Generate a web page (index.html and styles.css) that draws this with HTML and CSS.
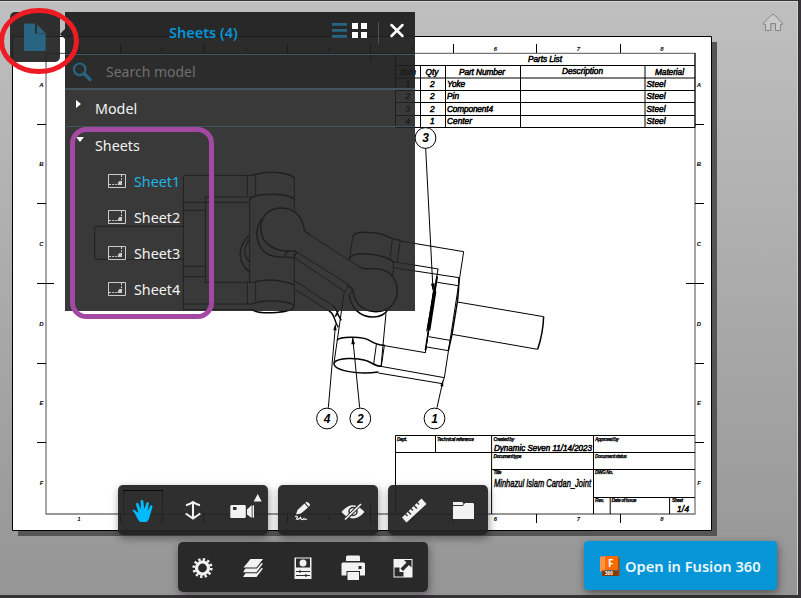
FILE: index.html
```html
<!DOCTYPE html>
<html lang="en">
<head>
<meta charset="utf-8">
<title>Sheets viewer</title>
<link rel="stylesheet" href="styles.css">
</head>
<body>
<main class="viewer">
  <svg class="drawing" width="801" height="598" viewBox="0 0 801 598">
    <path d="M18 42H717V536H18z" fill="#555"/>
    <path d="M12.5 36.5H711.5V530.5H12.5z" fill="#fff" stroke="#000"/>
    <g class="frame">
      <path d="M46 53.3H695V514H46z" stroke="#777" stroke-width="1.3"/>
      <path d="M120.5 44v9M203.7 44v9M287.5 44v9M370.5 44v17M453.5 44v9M536.5 44v9M620.5 44v9M120.5 514v9M203.7 514v9M287.5 514v9M370.5 505v18M453.5 514v9M536.5 514v9M620.5 514v9"/>
      <path d="M37 124.5h9M37 203.5h9M37 283.5h17M37 363.5h9M37 442.5h9M695 124.5h9M695 203.5h9M686 283.5h18M695 363.5h9M695 442.5h9"/>
      <path d="M395.5 53V127.5H695V53M395.5 65.5H695M395.5 78H695M395.5 90.5H695M395.5 102.5H695M395.5 115.5H695M420.5 65.5v62M445.5 65.5v62M520.5 65.5v62M645 65.5v62"/>
      <path d="M395.5 514V435.5H695M395.5 452.5H695M491.6 469.5H695M593.5 497.5H695M435.5 435.5v17M491.6 435.5V514M593.5 435.5V514M610.2 497.5V514M669.6 497.5V514"/>
    </g>
    <g class="mark">
      <text x="79" y="51">1</text><text x="162" y="51">2</text><text x="245.500" y="51">3</text><text x="329" y="51">4</text><text x="412" y="51">5</text><text x="495.500" y="51">6</text><text x="578.500" y="51">7</text><text x="662" y="51">8</text>
      <text x="79" y="521">1</text><text x="162" y="521">2</text><text x="245.500" y="521">3</text><text x="329" y="521">4</text><text x="412" y="521">5</text><text x="495.500" y="521">6</text><text x="578.500" y="521">7</text><text x="662" y="521">8</text>
      <text x="41.500" y="87">A</text><text x="41.500" y="166">B</text><text x="41.500" y="246">C</text><text x="41.500" y="325.500">D</text><text x="41.500" y="405">E</text><text x="41.500" y="484.500">F</text>
      <text x="699" y="87">A</text><text x="699" y="166">B</text><text x="699" y="246">C</text><text x="699" y="325.500">D</text><text x="699" y="405">E</text><text x="699" y="484.500">F</text>
    </g>
    <g class="parts">
      <text x="528" y="62.300" textLength="34">Parts List</text>
      <text x="400" y="74.500" textLength="16">Item</text><text x="425.500" y="74.500" textLength="13">Qty</text><text x="459" y="74.500" textLength="46">Part Number</text><text x="562" y="74" textLength="41">Description</text><text x="655" y="74.500" textLength="29">Material</text>
      <text x="405.500" y="86.700">1</text><text x="430" y="86.700">2</text><text x="447" y="86.700" textLength="18">Yoke</text><text x="646.500" y="86.700" textLength="19">Steel</text>
      <text x="405.500" y="99">2</text><text x="430" y="99">2</text><text x="447" y="99" textLength="12">Pin</text><text x="646.500" y="99" textLength="19">Steel</text>
      <text x="405.500" y="111.500">3</text><text x="430" y="111.500">2</text><text x="447" y="111.500" textLength="46">Component4</text><text x="646.500" y="111.500" textLength="19">Steel</text>
      <text x="405.500" y="124">4</text><text x="430" y="124">1</text><text x="447" y="124" textLength="25">Center</text><text x="646.500" y="124" textLength="19">Steel</text>
      <text x="494" y="450.500" textLength="98" lengthAdjust="spacingAndGlyphs">Dynamic Seven 11/14/2023</text>
      <text class="name" x="494" y="486.500" textLength="97" lengthAdjust="spacingAndGlyphs">Minhazul Islam Cardan_Joint</text>
      <text x="677" y="512" textLength="12">1/4</text>
    </g>
    <g class="caption">
      <text x="397" y="440.500" textLength="10">Dept.</text><text x="437" y="441" textLength="37">Technical reference</text><text x="493.500" y="441" textLength="21">Created by</text><text x="595" y="441" textLength="24">Approved by</text><text x="493.500" y="457.500" textLength="28">Document type</text><text x="595" y="457.500" textLength="32">Document status</text><text x="493.500" y="474" textLength="8">Title</text><text x="595" y="474" textLength="18">DWG No.</text><text x="595" y="502.200" textLength="9">Rev.</text><text x="611.500" y="502.200" textLength="25">Date of issue</text><text x="672" y="502.200" textLength="11">Sheet</text>
    </g>
    <!-- yoke, left half and arm -->
    <g class="part" transform="translate(180 150) scale(.33333)">
      <path d="M10 229H-256V328H10M10 76V479M10 76H215M202 76V140M10 157H209M10 181H76M10 349H76M10 380H76M76 141V397M76 141H215M76 397H225M10 462H215M10 479H225M202 397V462M209 150V397M343 82V182M343 310V465M227 74V138M227 395V455"/>
      <path class="bold" d="M215 76Q280 58 330 75L344 84M209 150Q218 133 280 133Q330 134 344 149M225 395Q280 382 344 405"/>
      <path class="bold" d="M215 463C240 448 330 450 343 468C345 489 240 495 215 479M209 254C172 290 170 334 209 367M209 266C191 292 188 314 209 337"/>
      <path class="bold" d="M348 302C300 309 242 290 242 235C243 195 270 174 305 174C348 174 367 206 372 236Q375 247 387 253M245 207C215 247 232 320 297 320L340 323M326 300L313 317M350 307L341 322"/>
      <path d="M387 253L538 350M344 302L508 405M343 323L494 424M343 392L457 466M343 417L447 483M508 405L494 424M520 416L505 442"/>
      <path class="bold" d="M538 350Q550 359 570 356C625 350 653 385 652 424C651 460 625 485 588 485C555 485 526 466 520 429Q517 408 500 408M508 438C515 475 540 501 578 501C605 500 618 490 624 478"/>
      <path class="bold" d="M519 259C523 241 585 246 605 253C628 260 640 270 661 271M508 330C510 301 585 313 610 320Q635 328 641 339M457 466Q470 475 473 492L484 511M447 483C465 490 462 515 475 532M475 481L466 500"/>
      <path d="M519 257L508 330M637 267L630 330M661 271L651 338M641 339L638 376"/>
    </g>
    <!-- yoke, right half and shaft -->
    <g class="part" transform="translate(310 220) scale(.33333)">
      <path d="M270 63L461 95L403 473L397 491M250 125L385 147M250 143L447 173M382 187L445 197M442 246L701 290M683 388L426 343M103 213L72 429M228 280L213 440M218 376L346 398L384 147M356 350L420 361M350 381L415 392M212 439L403 473M205 459L397 491M199 374L191 432M223 377L214 438M347 -216L369 210M397 491L381 563M128 352L149 563M76 320L55 563"/>
      <path class="bold" d="M81 361C90 347 162 350 178 361Q200 375 224 376M72 429C82 411 143 414 165 421C183 425 196 440 215 439M72 429C70 455 150 463 205 456M447 173Q446 215 442 246L426 343L415 392M701 290Q699 340 683 388"/>
      <path d="M380 168L356 334M376 190L350 334M372 205L346 398"/>
      <path class="bold" d="M382 170L346 390"/>
      <path d="M374 213L356 330" class="thick"/>
      <path class="tip" d="M128 352L135 373H124zM76 310L80 331H70zM399 480L400 500L391 497zM369 212L374 190L363 191z"/>
    </g>
    <g class="balloon">
      <circle cx="425.500" cy="138" r="10.400"/><text x="425.500" y="142.300">3</text>
      <circle cx="327" cy="418.500" r="10.400"/><text x="327" y="422.800">4</text>
      <circle cx="360.300" cy="418.500" r="10.400"/><text x="360.300" y="422.800">2</text>
      <circle cx="434.500" cy="418.500" r="10.400"/><text x="434.500" y="422.800">1</text>
    </g>
    <path class="home" d="M763.500 23.200L771.500 15Q773 13.500 774.500 15L782.500 23.200V24.300H780.600V30.500H775.500V23.500H770.800V30.500H765.500V24.300H763.500z"/>
  </svg>

  <button class="doc" aria-label="Documents"><svg width="50" height="50"><path d="M15 11.500H25V21.500H35.700V37.500Q35.700 39 34.200 39H15.500Q14 39 14 37.500V13zM27 12.500L35.500 21H27z"/></svg></button>

  <section class="panel">
    <header class="head">
      <h1>Sheets (4)</h1>
      <svg width="100" height="42" viewBox="315 12 100 42">
        <path d="M332 23h15v2.800h-15zM332 29h15v2.800h-15zM332 35h15v2.800h-15z" fill="#276582"/>
        <path d="M352 23h6v6h-6zM361 23h6v6h-6zM352 32h6v6h-6zM361 32h6v6h-6z" fill="#fff"/>
        <path d="M378.500 22V44" stroke="#45545d"/>
        <path d="M391.500 25L402.500 36M402.500 25L391.500 36" stroke="#fff" stroke-width="2.500" stroke-linecap="round"/>
      </svg>
    </header>
    <div class="search"><svg width="41" height="33"><circle cx="14.700" cy="14.300" r="5.800" fill="none" stroke="#276582" stroke-width="2.200"/><path d="M19 18.500L25 24.500" stroke="#276582" stroke-width="3.200" stroke-linecap="round"/></svg><span>Search model</span></div>
    <div class="group model"><i class="closed"></i>Model</div>
    <div class="group"><i class="open"></i>Sheets</div>
    <ul class="sheets">
      <li class="on"><svg class="thumb" viewBox="0 0 18 14"><path d="M.5.500h17v13H.5z"/><path d="M1 10.500h9M13.500 1v6" stroke-dasharray="2 1.200"/><path d="M10 11V8.500L11.500 7H14V11z" class="solid"/></svg>Sheet1</li>
      <li><svg class="thumb" viewBox="0 0 18 14"><path d="M.5.500h17v13H.5z"/><path d="M1 10.500h9M13.500 1v6" stroke-dasharray="2 1.200"/><path d="M10 11V8.500L11.500 7H14V11z" class="solid"/></svg>Sheet2</li>
      <li><svg class="thumb" viewBox="0 0 18 14"><path d="M.5.500h17v13H.5z"/><path d="M1 10.500h9M13.500 1v6" stroke-dasharray="2 1.200"/><path d="M10 11V8.500L11.500 7H14V11z" class="solid"/></svg>Sheet3</li>
      <li><svg class="thumb" viewBox="0 0 18 14"><path d="M.5.500h17v13H.5z"/><path d="M1 10.500h9M13.500 1v6" stroke-dasharray="2 1.200"/><path d="M10 11V8.500L11.500 7H14V11z" class="solid"/></svg>Sheet4</li>
    </ul>
  </section>

  <nav class="tools">
    <div class="row">
      <div class="bar">
        <button class="active" aria-label="Pan"><svg viewBox="0 0 50 50"><path d="M14.300 25Q16.500 24 18.500 26.500L20.500 28 18 19.500Q18 17 20 18L23 24.500 22.500 16.500Q23.500 13.500 25.300 16L26.300 24 28.500 17.500Q30.500 16 31 18.500L29.500 26 32.500 20.500Q34.500 19.500 34.500 22L31.500 32Q31 35.500 28.500 37H22Q19.500 35 17.800 30z" fill="#00baff"/></svg></button>
        <button aria-label="Dolly"><svg viewBox="0 0 50 50"><path d="M25 17V33M18 20.300Q22 19.300 25 17Q28 19.300 32 20.300M17.700 28.500L25 33.500L32.300 28.500" fill="none" stroke="#f2f2f2" stroke-width="2.100"/></svg></button>
        <button aria-label="Camera"><svg viewBox="0 0 50 50"><path fill-rule="evenodd" d="M13.300 20H26.800Q27.800 20 27.800 21.500V31.500Q27.800 33 26.800 33H13.300Q12.300 33 12.300 31.500V21.500Q12.300 20 13.300 20zM15 22V25H18.500V22zM29 24.500L33.700 20V33L29 29.500zM34.500 21L36 20V33L34.500 32zM39.700 9L43.700 16.500H35.700z"/></svg></button>
      </div>
      <div class="bar">
        <button aria-label="Markup"><svg viewBox="0 0 50 50"><path d="M18 29.500L19.500 25 26.500 18.500 30 22.500 23 28.500zM27.300 17.800L28.500 16.800Q32 18 32 20.500L30.800 21.800z"/><path d="M17 31.500Q21 31 18.500 34Q20 35 22.500 32.500Q23.500 36 26 33.500Q27 35 29 34" fill="none" stroke="#f2f2f2" stroke-width="1.200"/></svg></button>
        <button aria-label="Hide"><svg viewBox="0 0 50 50"><path d="M13.500 27Q24.500 13.500 36.500 27Q25 40 13.500 27z"/><circle cx="25" cy="26.500" r="4" fill="none" stroke="#303030" stroke-width="1.500"/><path d="M17 35L33.500 18" stroke="#303030" stroke-width="3.600"/><path d="M17 34.500L33 19" stroke="#f2f2f2" stroke-width="1.600"/></svg></button>
      </div>
      <div class="bar">
        <button aria-label="Measure"><svg viewBox="0 0 50 50"><path d="M14 32.500L33.500 13.500 38.500 19 18.500 37.500z"/><path d="M17.500 29l2 2M20 26.500l3 3M23 23.500l2 2M26 20.500l3 3M29 17.500l2 2" stroke="#303030" stroke-width="1.300"/></svg></button>
        <button aria-label="Folder"><svg viewBox="0 0 50 50"><path d="M15 17H24Q25.500 18 25.500 19.200L24.500 20H15zM15 21H25L27 18H35Q36 18.200 36 20V34H15z"/></svg></button>
      </div>
    </div>
    <div class="row">
      <div class="bar">
        <button aria-label="Settings"><svg viewBox="0 0 50 50"><circle cx="24.500" cy="26" r="6" fill="none" stroke="#f2f2f2" stroke-width="3.200"/><circle cx="24.500" cy="26" r="8.600" fill="none" stroke="#f2f2f2" stroke-width="3" stroke-dasharray="2.300 2.203"/></svg></button>
        <button aria-label="Layers"><svg viewBox="0 0 50 50"><path d="M22.500 17H35L28.500 25.500H15.500zM17.500 26.500H29L33.500 21 35 21.500 28.500 30.300H15zM17.500 31.300H29L33.500 26 35 26.500 28.500 35H15z"/></svg></button>
        <button aria-label="Properties"><svg viewBox="0 0 50 50"><path d="M16.500 15.500H33.500V37H16.500z"/><path d="M18 16.500H32V25.500H18z" fill="#2a2a2a"/><circle cx="25" cy="21" r="3.500"/><path d="M18 29.500h14M18 33.500h14M22 28v3M28 32v3" stroke="#2a2a2a" stroke-width="1.100"/></svg></button>
        <button aria-label="Print"><svg viewBox="0 0 50 50"><path d="M18 15Q18 13.500 19.500 13.500H31Q32 13.500 32 15V19H18zM15 20.500H35.500Q37 20.500 37 22V33.500H32V29H18.500V33.500H13.500V22Q13.500 20.500 15 20.500zM19.500 30H31V38H19.500z"/><path d="M30.500 24h3v3h-3z" fill="#2a2a2a"/></svg></button>
        <button aria-label="Full screen"><svg viewBox="0 0 50 50"><path d="M15.500 17H34.500V35.500H15.500z"/><path d="M16.500 25.500H21.500V30H25.500V34.500H16.500zM26 18H33.500V25.500L31 23 25 29 22.500 26.500 28.500 20.500z" fill="#2a2a2a"/></svg></button>
      </div>
    </div>
  </nav>

  <button class="fusion"><svg width="20" height="20"><path d="M0 1L2 0V15L0 16z" fill="#ff9346"/><path d="M1 1L5 0V15H1z" fill="#ff9346"/><path d="M5 0H18V14H5z" fill="#ff6b00"/><path d="M18 1L19.500 2V19L18 20z" fill="#a64600"/><path d="M2 14.500H18.500V20H2z" fill="#873900"/><text x="8" y="11" class="f">F</text><text x="5" y="19" class="n">360</text></svg><span>Open in Fusion 360</span></button>

  <svg class="notes" width="801" height="598"><ellipse cx="39" cy="41" rx="37.500" ry="30.500" stroke="#ed1c24"/><rect x="72.500" y="129.500" width="139" height="187" rx="14" stroke="#a349a4"/></svg>
</main>
</body>
</html>
```
FILE: styles.css
```css
* { box-sizing: border-box; }
body { margin: 0; overflow: hidden; background: #383638; font-family: "Noto Sans", sans-serif; }
.viewer { position: relative; width: 801px; height: 598px; background: linear-gradient(#bfbfbf, #959595); overflow: hidden; }
.viewer::before { content: ""; position: absolute; inset: 1px 3px 3px 0; border-right: 1px solid #d0d0d0; box-shadow: 0 0 0 4px #353335, inset 0 1px #d5d5d5; }
.drawing, .notes { position: absolute; inset: 0; }
.notes { fill: none; stroke-width: 5; pointer-events: none; }
.drawing text { font-family: "Liberation Sans", sans-serif; font-style: italic; font-weight: bold; }
.frame { fill: none; stroke: #000; }
.mark { font-size: 6px; text-anchor: middle; }
.drawing .parts text { font-size: 8.3px; font-weight: normal; stroke: #000; stroke-width: .5px; }
.drawing .parts .name { font-size: 11.5px; }
.caption { font-size: 4.8px; stroke: #000; stroke-width: .25px; }
.part { fill: none; stroke: #000; }
.part path { vector-effect: non-scaling-stroke; }
.part .bold { stroke-width: 1.5px; }
.part .thick { stroke-width: 3.5px; }
.part .tip { fill: #000; stroke: none; }
.balloon { font-size: 12px; text-anchor: middle; fill: #000; }
.balloon circle { fill: #fff; stroke: #000; }
.home { fill: #c9c9c9; stroke: #858585; }
button { border: 0; padding: 0; background: none; }
.doc { position: absolute; left: 10px; top: 12px; width: 50px; height: 50px; border-radius: 5px; background: rgba(34, 34, 34, .93); }
.doc::after { content: ""; position: absolute; left: 50px; top: 17px; border: 5px solid transparent; border-left: 0; border-right-color: #292929; }
.doc svg { display: block; fill: #276582; }
.panel { position: absolute; left: 65px; top: 12px; width: 350px; height: 299px; background: rgba(35, 35, 35, .9); color: #f2f2f2; font-size: 15px; }
.head { display: flex; justify-content: flex-end; height: 42px; background: rgba(24, 24, 24, .4); }
.head h1 { flex: 1; margin: 0; padding-left: 104px; font-size: 14.5px; line-height: 40px; font-weight: 600; color: #0696d7; white-space: nowrap; }
.search { display: flex; height: 36px; border-top: 1px solid #45545d; border-bottom: 2px solid #45545d; background: rgba(24, 24, 24, .4); color: #707070; font-size: 14px; line-height: 34px; }
.group { display: flex; height: 37px; line-height: 37px; font-size: 14.3px; }
.model { border-bottom: 1px solid #45545d; }
.group i { width: 30px; }
.group i::before { content: ""; display: block; width: 0; height: 0; border: 4.5px solid transparent; }
.group .closed::before { margin: 10px 0 0 11px; border-left: 5px solid #fff; border-right: 0; }
.group .open::before { margin: 10px 0 0 11px; border-top: 5px solid #fff; border-bottom: 0; }
.sheets { margin: 0; padding: 0; list-style: none; }
.sheets li { display: flex; align-items: center; height: 36px; padding: 0 0 2px 43px; gap: 8px; font-size: 14.3px; }
.sheets .on { color: #1fb5e5; }
.thumb { width: 18px; height: 14px; fill: none; stroke: #ccc; }
.thumb .solid { fill: #ccc; stroke: none; }
.tools { position: absolute; left: 118px; top: 485px; display: flex; flex-direction: column; align-items: center; gap: 7px; }
.row { display: flex; gap: 10px; }
.bar { display: flex; border-radius: 5px; background: rgba(34, 34, 34, .94); box-shadow: 1px 3px 9px rgba(0, 0, 0, .4); }
.bar button { width: 50px; height: 50px; }
.bar svg { display: block; width: 50px; height: 50px; fill: #f2f2f2; }
.bar .active { background: linear-gradient(#090909, #090909) 5px 5px / 40px 1px no-repeat, linear-gradient(#1b1b1b, rgba(34, 34, 34, 0)) 5px 5px / 1px 40px no-repeat, linear-gradient(#1b1b1b, rgba(34, 34, 34, 0)) 44px 5px / 1px 40px no-repeat; }
.fusion { position: absolute; left: 584px; top: 541px; width: 193px; height: 49px; padding-left: 16px; display: flex; align-items: center; gap: 5px; border-radius: 4px; background: #0696d7; box-shadow: 1px 3px 9px rgba(0, 0, 0, .45); color: #eaf6fc; font: 600 14.65px "Noto Sans", sans-serif; white-space: nowrap; }
.fusion .f { font: bold 10px "Noto Sans", sans-serif; fill: #fff; }
.fusion .n { font: bold 4.5px "Noto Sans", sans-serif; fill: #fff; }
```
